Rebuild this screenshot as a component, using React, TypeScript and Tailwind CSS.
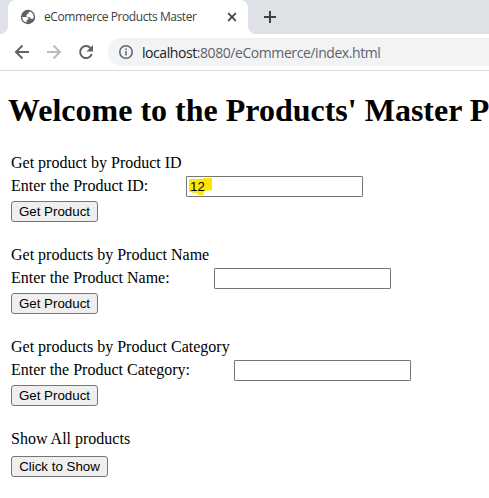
import React from "react";

const serif = "font-['Liberation_Serif','Times_New_Roman',serif]";

function Button({ label, width }: { label: string; width: string }) {
  return (
    <button className={`block h-[21px] ${width} rounded-[3px] border border-[#767676] bg-[#efefef] font-['Liberation_Sans',Arial,sans-serif] text-[13.333px] leading-[19px] whitespace-nowrap text-black`}>
      {label}
    </button>
  );
}

function Row({ title, label, labelWidth, value }: { title: string; label: string; labelWidth: string; value?: string }) {
  return (
    <section className="h-[92px]">
      <div className="h-[22px] leading-[20px]">{title}</div>
      <div className="flex h-[26px]">
        <div className={`${labelWidth} shrink-0 leading-[22px]`}>{label}</div>
        <div className="mt-px flex h-[21px] w-[177px] rounded-[1px] border border-[#767676] bg-white pl-[2px] pt-px font-['Liberation_Sans',Arial,sans-serif] text-[13.333px]">
          {value && (
            <span className="h-[17px] w-[23px] bg-[#ffe500] pl-px leading-[17px] [clip-path:polygon(0_6%,55%_6%,65%_0,100%_0,100%_72%,65%_76%,62%_100%,45%_100%,30%_88%,0_82%)]">
              {value}
            </span>
          )}
        </div>
      </div>
      <Button label="Get Product" width="w-[87px]" />
    </section>
  );
}

export default function App() {
  return (
    <div className="h-[498px] w-[489px] overflow-hidden bg-white">
      <header className="font-['Open_Sans','Noto_Sans',sans-serif]">
        <div className="flex h-[34px] bg-white">
          <div className="w-2 rounded-br-lg bg-[#dee1e6]" />
          <div className="bg-[#dee1e6]">
            <div className="flex h-[34px] w-[240px] items-center rounded-t-lg bg-white pl-3">
              <svg width="16" height="16" viewBox="0 0 16 16">
                <circle cx="8" cy="8" r="7.2" fill="#5f6368" />
                <path d="M2.3 8h4.2c1.2 0 1.8.8 1.8 1.8v1H6.6v2.7C4 13 2.2 10.9 2.3 8zM9.7 2.6c2.4.8 4 2.8 4 5.4l-.3 1.3c-.6.5-1.3.7-2.1.5-.8-.2-1.2-.8-1.2-1.6H8.4C7.1 8.2 6.5 7.5 6.5 6.500c0-1.100.8-1.700 1.900-1.700.2-1.100.5-1.700 1.300-2.200z" fill="white" />
              </svg>
              <span className="ml-2 w-[183px] text-[12px] tracking-[-0.42px] whitespace-nowrap text-[#3c4043]">eCommerce Products Master</span>
              <svg width="10" height="10" viewBox="0 0 10 10" stroke="#3c4043" strokeWidth="1.7"><path d="M1.200 1.200l7.600 7.600M8.800 1.200L1.200 8.800" /></svg>
            </div>
          </div>
          <div className="flex-1 rounded-bl-lg bg-[#dee1e6] pl-4 pt-[11px]">
            <svg width="12" height="12" viewBox="0 0 12 12" stroke="#3c4043" strokeWidth="2"><path d="M6 0v12M0 6h12" /></svg>
          </div>
        </div>
        <div className="flex h-[37px] items-center border-b border-[#d9dbde] pl-[14px]">
          <svg width="82" height="16" viewBox="0 0 82 16" fill="none" strokeWidth="2">
            <path d="M15 8H2.500M8.500 1.500L2 8l6.500 6.500" stroke="#5f6368" />
            <path d="M33 8h12.500M39.500 1.500L46 8l-6.500 6.500" stroke="#babcbe" />
            <path d="M76.500 4A6 6 0 1 0 77.800 10" stroke="#5f6368" />
            <path d="M79 1v6.500h-6.500z" fill="#5f6368" />
          </svg>
          <div className="ml-3 flex h-7 flex-1 items-center rounded-l-full bg-[#f1f3f4] pl-[11px]">
            <svg width="14" height="14" viewBox="0 0 14 14" fill="none" stroke="#5f6368" strokeWidth="1.500">
              <circle cx="7" cy="7" r="6.250" />
              <path d="M7 6v4.500M7 3.500V5" />
            </svg>
            <div className="ml-[9px] text-[14px] tracking-[-0.43px] whitespace-nowrap text-[#5f6368]">
              <span className="text-[#202124]">localhost</span>:8080/eCommerce/index.html
            </div>
          </div>
        </div>
      </header>
      <main className={`${serif} pl-[11px] pt-[21px] text-[16px] text-black`}>
        <h1 className="-ml-[3px] h-[61px] whitespace-nowrap text-[32px] leading-[37px] font-bold">Welcome to the Products' Master P</h1>
        <Row title="Get product by Product ID" label="Enter the Product ID:" labelWidth="w-[175px]" value="12" />
        <Row title="Get products by Product Name" label="Enter the Product Name:" labelWidth="w-[203px]" />
        <Row title="Get products by Product Category" label="Enter the Product Category:" labelWidth="w-[223px]" />
        <div className="h-[27px] leading-[20px]">Show All products</div>
        <Button label="Click to Show" width="w-[97px]" />
      </main>
    </div>
  );
}
